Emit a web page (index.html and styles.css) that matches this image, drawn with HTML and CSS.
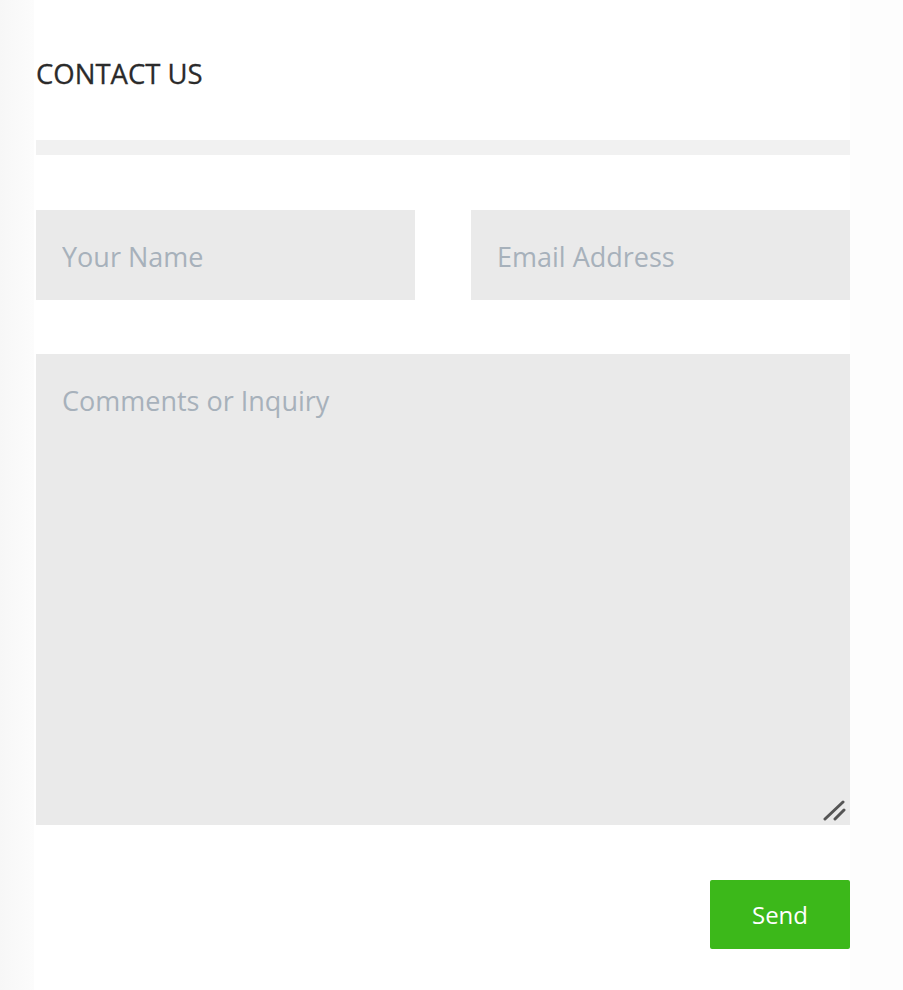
FILE: index.html
```html
<!DOCTYPE html>
<html lang="en">
<head>
<meta charset="utf-8">
<title>Contact Us</title>
<link rel="stylesheet" href="styles.css">
</head>
<body>
<div class="page">
  <aside class="side-left"></aside>
  <main class="content">
    <h2 class="title">CONTACT US</h2>
    <div class="divider"></div>
    <form class="form">
      <div class="row">
        <input class="field" type="text" placeholder="Your Name">
        <input class="field" type="email" placeholder="Email Address">
      </div>
      <div class="area-wrap">
        <textarea class="area" placeholder="Comments or Inquiry"></textarea>
        <svg class="grip" width="24" height="22" viewBox="0 0 24 22" aria-hidden="true">
          <path d="M2 20 L20 3" stroke="#555" stroke-width="3" stroke-linecap="round"/>
          <path d="M12 20 L21 11" stroke="#555" stroke-width="3" stroke-linecap="round"/>
        </svg>
      </div>
      <div class="actions">
        <button class="send" type="button">Send</button>
      </div>
    </form>
  </main>
  <aside class="side-right"></aside>
</div>
</body>
</html>
```

FILE: styles.css
```css
* { box-sizing: border-box; }
html, body {
  margin: 0;
  padding: 0;
  background: #ffffff;
  font-family: "Open Sans", "Liberation Sans", sans-serif;
}
.page {
  display: flex;
  min-height: 990px;
}
.side-left {
  width: 34px;
  flex: none;
  background: linear-gradient(to right, #f7f7f7, #fcfcfc);
}
.side-right {
  flex: 1;
  background: #fdfdfd;
}
.content {
  width: 816px;
  flex: none;
  padding: 0 0 0 2px;
  background: #fff;
}
.title {
  margin: 0;
  padding-top: 56px;
  font-size: 27.5px;
  line-height: 36px;
  font-weight: 400;
  color: #2b2b2b;
  -webkit-text-stroke: 0.3px #2b2b2b;
}
.divider {
  margin-top: 48px;
  height: 15px;
  background: #f1f1f1;
  width: 814px;
}
.form {
  width: 814px;
  padding-top: 55px;
}
.row {
  display: flex;
  gap: 56px;
}
.field {
  flex: 1;
  min-width: 0;
  height: 90px;
  border: none;
  outline: none;
  background: #eaeaea;
  padding: 2px 26px 0;
  font-family: inherit;
  font-size: 27px;
  color: #333;
}
.field::placeholder, .area::placeholder {
  color: #a7b1bb;
  opacity: 1;
}
.area-wrap {
  position: relative;
  margin-top: 54px;
}
.area {
  display: block;
  width: 100%;
  height: 471px;
  border: none;
  outline: none;
  resize: none;
  background: #eaeaea;
  padding: 28px 26px;
  font-family: inherit;
  font-size: 27px;
  line-height: 37px;
  color: #333;
}
.grip {
  position: absolute;
  right: 3px;
  bottom: 4px;
}
.actions {
  display: flex;
  justify-content: flex-end;
  margin-top: 55px;
}
.send {
  width: 140px;
  height: 69px;
  border: none;
  border-radius: 2px;
  background: #3cb81a;
  color: #fff;
  font-family: inherit;
  font-size: 24px;
  cursor: pointer;
}
```
